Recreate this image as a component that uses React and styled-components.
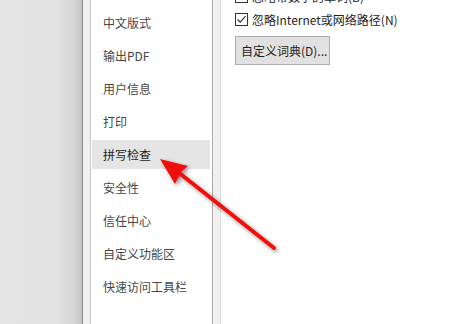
import React from "react";
import styled, { createGlobalStyle } from "styled-components";

const Global = createGlobalStyle`
  html, body { margin: 0; padding: 0; background: #ffffff; }
  body { font-family: "Noto Sans CJK SC", "Noto Sans", sans-serif; }
  * { box-sizing: border-box; }
`;

const Page = styled.div`
  position: relative;
  width: 472px;
  height: 324px;
  overflow: hidden;
  display: flex;
  background: #ffffff;
`;

const Backdrop = styled.div`
  width: 82px;
  flex: none;
  background: linear-gradient(to right, #e4e4e4 0%, #e2e2e2 70%, #d6d6d6 90%, #c4c4c4 100%);
`;

const Dialog = styled.div`
  flex: 1;
  display: flex;
  border-left: 1px solid #8a8a8a;
  background: #f0f0f0;
  padding-left: 7px;
`;

const Sidebar = styled.nav`
  width: 123px;
  flex: none;
  background: #ffffff;
  border-left: 1px solid #c9c9c9;
  border-right: 1px solid #acacac;
  padding-top: 8px;
  display: flex;
  flex-direction: column;
  gap: 4px;
`;

const NavItem = styled.div`
  height: 29px;
  margin: 0 2px 0 1px;
  padding-left: 11px;
  display: flex;
  align-items: center;
  font-size: 12px;
  color: ${(p) => (p.$active ? "#1e1e1e" : "#474747")};
  background: ${(p) => (p.$active ? "#e5e5e5" : "transparent")};
  white-space: nowrap;
`;

const Content = styled.main`
  flex: 1;
  margin-left: 7px;
  background: #ffffff;
  border-left: 1px solid #dadada;
  padding-left: 14px;
  display: flex;
  flex-direction: column;
  align-items: flex-start;
`;

const Rows = styled.div`
  margin-top: -15px;
  display: flex;
  flex-direction: column;
`;

const Row = styled.label`
  height: 23px;
  display: flex;
  align-items: center;
  gap: 4px;
  font-size: 12px;
  color: #1e1e1e;
  white-space: nowrap;
`;

const Box = styled.span`
  width: 13px;
  height: 13px;
  border: 1px solid #333333;
  background: #ffffff;
  display: flex;
  align-items: center;
  justify-content: center;
  flex: none;
`;

const Button = styled.button`
  margin-top: 5px;
  width: 95px;
  height: 29px;
  padding: 0 0 0 5px;
  text-align: left;
  background: #e1e1e1;
  border: 1px solid #adadad;
  font-family: "Noto Sans CJK SC", "Noto Sans", sans-serif;
  font-size: 12px;
  color: #1e1e1e;
  white-space: nowrap;
`;

const Overlay = styled.svg`
  position: absolute;
  left: 0;
  top: 0;
  pointer-events: none;
`;

function Check({ checked }) {
  return (
    <Box>
      {checked && (
        <svg width="11" height="11" viewBox="0 0 11 11">
          <path d="M1.5 5.5 L4.2 8.2 L9.5 2.2" fill="none" stroke="#333" strokeWidth="1.2" />
        </svg>
      )}
    </Box>
  );
}

const items = [
  "中文版式",
  "输出PDF",
  "用户信息",
  "打印",
  "拼写检查",
  "安全性",
  "信任中心",
  "自定义功能区",
  "快速访问工具栏",
];

export default function App() {
  return (
    <>
      <Global />
      <Page>
        <Backdrop />
        <Dialog>
          <Sidebar>
            {items.map((t) => (
              <NavItem key={t} $active={t === "拼写检查"}>
                {t}
              </NavItem>
            ))}
          </Sidebar>
          <Content>
            <Rows>
              <Row>
                <Check checked={false} />
                忽略带数字的单词(B)
              </Row>
              <Row>
                <Check checked />
                忽略Internet或网络路径(N)
              </Row>
            </Rows>
            <Button>自定义词典(D)...</Button>
          </Content>
        </Dialog>
        <Overlay width="472" height="324" viewBox="0 0 472 324">
          <defs>
            <filter id="sh" x="-20%" y="-20%" width="140%" height="140%">
              <feGaussianBlur in="SourceAlpha" stdDeviation="2" />
              <feOffset dx="2" dy="2" result="b" />
              <feComponentTransfer>
                <feFuncA type="linear" slope="0.45" />
              </feComponentTransfer>
              <feMerge>
                <feMergeNode />
                <feMergeNode in="SourceGraphic" />
              </feMerge>
            </filter>
          </defs>
          <g filter="url(#sh)">
            <line x1="274" y1="248" x2="178" y2="172" stroke="#f21111" strokeWidth="4" strokeLinecap="round" />
            <path d="M160 159 L188 166 L181 172 L175 184 Z" fill="#f21111" />
          </g>
        </Overlay>
      </Page>
    </>
  );
}
